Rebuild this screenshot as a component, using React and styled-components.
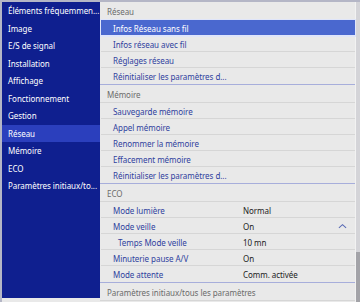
import styled, { createGlobalStyle } from "styled-components";

const GlobalStyle = createGlobalStyle`
  html, body { margin: 0; padding: 0; background: #e9e9e9; }
  * { box-sizing: border-box; }
`;

const navItems = [
  "Éléments fréquemmen...",
  "Image",
  "E/S de signal",
  "Installation",
  "Affichage",
  "Fonctionnement",
  "Gestion",
  "Réseau",
  "Mémoire",
  "ECO",
  "Paramètres initiaux/to...",
];

const groups = [
  {
    title: "Réseau",
    items: [
      { label: "Infos Réseau sans fil", selected: true },
      { label: "Infos réseau avec fil" },
      { label: "Réglages réseau" },
      { label: "Réinitialiser les paramètres d..." },
    ],
  },
  {
    title: "Mémoire",
    items: [
      { label: "Sauvegarde mémoire" },
      { label: "Appel mémoire" },
      { label: "Renommer la mémoire" },
      { label: "Effacement mémoire" },
      { label: "Réinitialiser les paramètres d..." },
    ],
  },
  {
    title: "ECO",
    items: [
      { label: "Mode lumière", value: "Normal" },
      { label: "Mode veille", value: "On", open: true },
      { label: "Temps Mode veille", value: "10 mn", sub: true },
      { label: "Minuterie pause A/V", value: "On" },
      { label: "Mode attente", value: "Comm. activée" },
    ],
  },
];

const App = () => {
  return (
    <>
      <GlobalStyle />
      <Frame>
        <Nav>
          {navItems.map((item) => (
            <NavItem key={item} active={item === "Réseau"}>
              {item}
            </NavItem>
          ))}
        </Nav>

        <Panel>
          <List>
            {groups.map((group) => (
              <Group key={group.title}>
                <Header>{group.title}</Header>
                {group.items.map((item) => (
                  <Row key={item.label} selected={item.selected}>
                    <Label sub={item.sub}>{item.label}</Label>
                    {item.value && <Value>{item.value}</Value>}
                    {item.open && (
                      <Chevron viewBox="0 0 10 6">
                        <path d="M1 5 L5 1.5 L9 5" />
                      </Chevron>
                    )}
                  </Row>
                ))}
              </Group>
            ))}
            <Header>Paramètres initiaux/tous les paramètres</Header>
          </List>
          <Track>
            <Thumb />
          </Track>
        </Panel>
      </Frame>
    </>
  );
};

export default App;

const Frame = styled.div`
  width: 360px;
  height: 302px;
  display: flex;
  align-items: flex-start;
  background: #e9e9e9;
  border-top: 2px solid #b4b6c6;
  border-left: 2px solid #b4b6c6;
  font-family: "Noto Sans", "Open Sans", sans-serif;
  font-size: 8px;
  letter-spacing: -0.05px;
  overflow: hidden;
`;

const Nav = styled.div`
  width: 98px;
  height: 296px;
  background: #0f1f8f;
  display: flex;
  flex-direction: column;
`;

const NavItem = styled.div`
  height: 17.5px;
  line-height: 18.5px;
  padding-left: 6px;
  color: #ffffff;
  white-space: nowrap;
  overflow: hidden;
  background: ${(p) => (p.active ? "#2b3fbd" : "transparent")};
`;

const Panel = styled.div`
  flex: 1;
  height: 300px;
  display: flex;
`;

const List = styled.div`
  flex: 1;
  display: flex;
  flex-direction: column;
`;

const Group = styled.div`
  border-bottom: 1px solid #a7aedb;
`;

const Header = styled.div`
  height: 18px;
  line-height: 19px;
  padding-left: 7px;
  color: #6b6b6b;
  border-bottom: 1px solid #d6d6d6;
  white-space: nowrap;
`;

const Row = styled.div`
  position: relative;
  height: 16px;
  display: flex;
  align-items: center;
  padding-top: 1.5px;
  margin-left: 1px;
  color: #2f3f9e;
  border-bottom: 1px solid ${(p) => (p.selected ? "#dfe5fa" : "#d6d6d6")};
  background: ${(p) => (p.selected ? "#4a68cf" : "transparent")};
  outline: ${(p) => (p.selected ? "1px solid #dfe5fa" : "none")};
  ${(p) => p.selected && "color: #ffffff;"}
  &:last-child {
    border-bottom: none;
  }
`;

const Label = styled.span`
  width: 142px;
  padding-left: ${(p) => (p.sub ? "17px" : "12px")};
  white-space: nowrap;
`;

const Value = styled.span`
  color: #222222;
`;

const Chevron = styled.svg`
  position: absolute;
  right: 8px;
  top: 5px;
  width: 9px;
  height: 6px;
  fill: none;
  stroke: #5a6bb5;
  stroke-width: 1.2;
`;

const Track = styled.div`
  width: 5px;
  background: #d4d4d8;
  border-left: 1px solid #f2f2f2;
  display: flex;
  flex-direction: column;
  justify-content: flex-end;
`;

const Thumb = styled.div`
  height: 50px;
  background: #a3a3a8;
`;
